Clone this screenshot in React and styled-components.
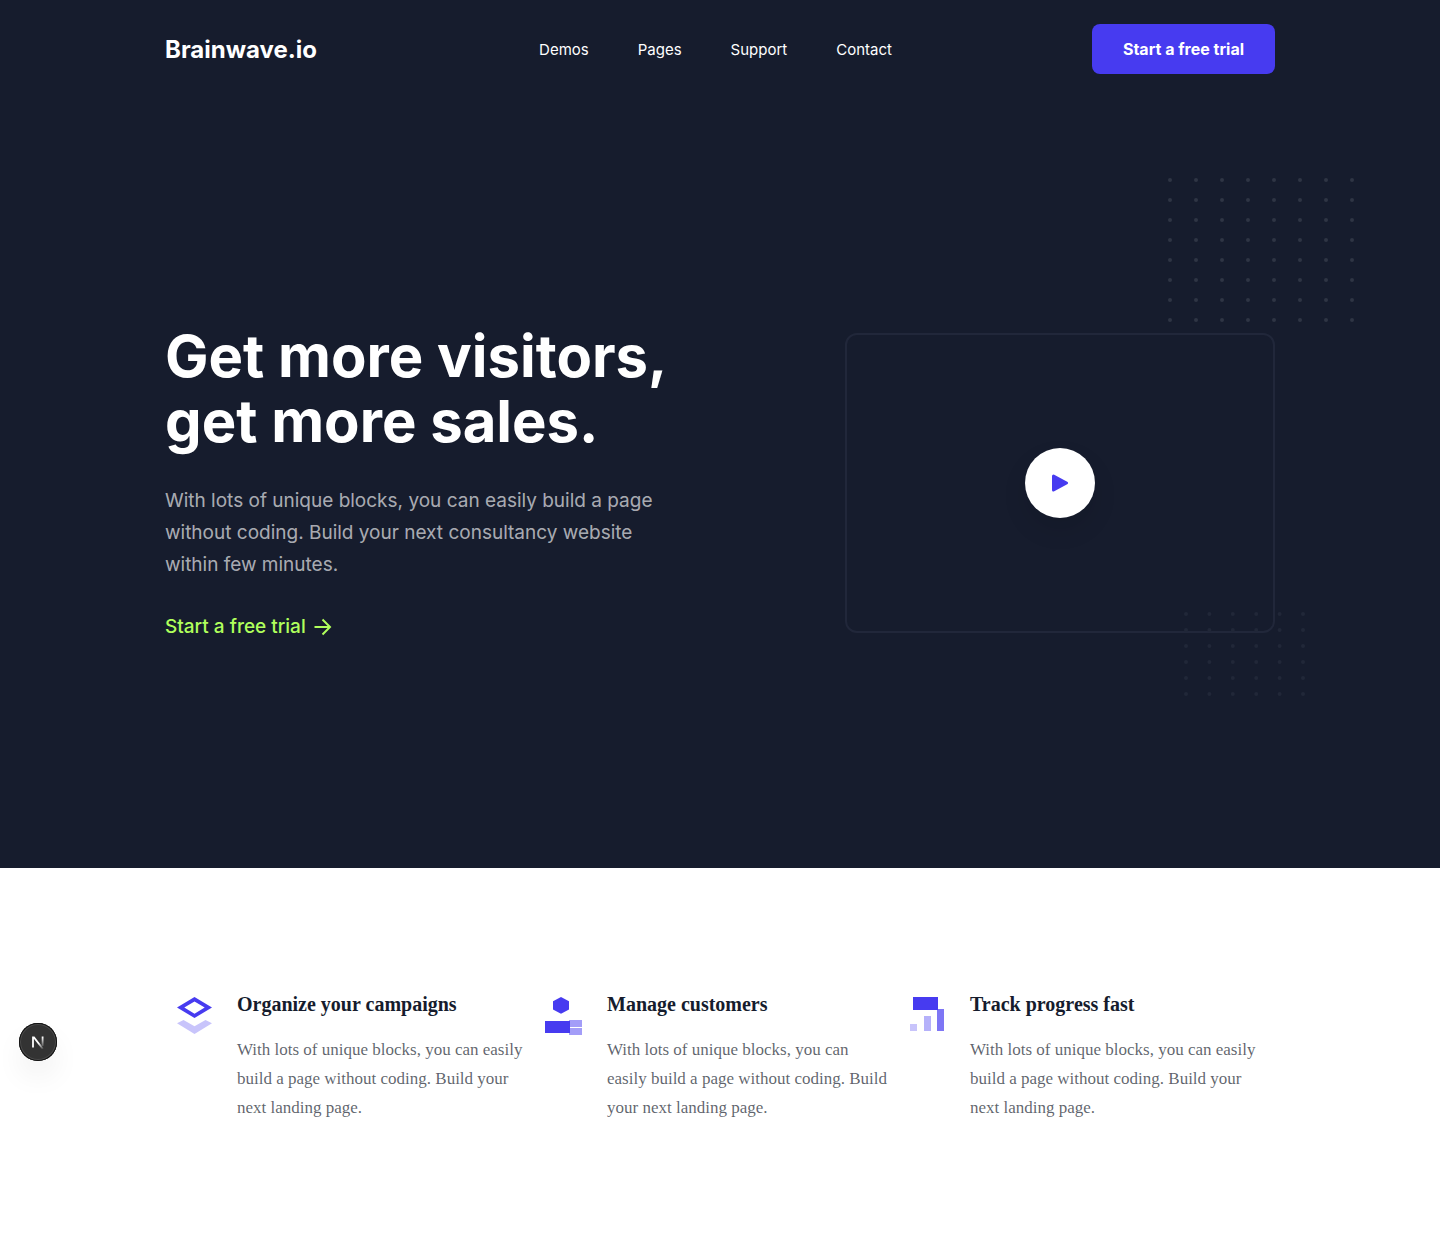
import React from "react";
import styled, { createGlobalStyle } from "styled-components";

const GlobalStyle = createGlobalStyle`
  *, *::before, *::after { box-sizing: border-box; }
  body { margin: 0; background: #ffffff; font-family: Inter, sans-serif; }
  h1, h2, p { margin: 0; }
  a { color: inherit; text-decoration: none; }
  button { border: 0; font-family: inherit; cursor: pointer; }
`;

const Container = styled.div`
  width: 100%;
  max-width: 1142px;
  margin: 0 auto;
  padding: 0 16px;
`;

const Dark = styled.div`
  background: #161c2d;
  color: #ffffff;
  overflow: hidden;
`;

const HeaderRow = styled(Container)`
  display: flex;
  align-items: center;
  justify-content: space-between;
  padding-top: 24px;
  padding-bottom: 24px;
`;

const Brand = styled.a`
  padding-top: 2px;
  font-size: 24px;
  font-weight: 700;
  line-height: 32px;
`;

const Nav = styled.nav`
  display: flex;
  gap: 49px;
  margin-left: 22px;
  padding-top: 2px;
`;

const NavLink = styled.a`
  font-size: 15px;
  line-height: 24px;
`;

const TrialButton = styled.button`
  min-width: 183px;
  height: 50px;
  padding: 0 24px;
  border-radius: 8px;
  background: #473bf0;
  color: #ffffff;
  font-size: 16px;
  font-weight: 700;
`;

const Hero = styled(Container)`
  display: flex;
  align-items: center;
  justify-content: space-between;
  gap: 32px;
  min-height: 770px;
`;

const HeroCopy = styled.div`
  flex: 0 1 540px;
`;

const Headline = styled.h1`
  font-size: 58px;
  font-weight: 700;
  line-height: 65px;
`;

const Lead = styled.p`
  max-width: 490px;
  margin-top: 31px;
  font-size: 19px;
  line-height: 32px;
  color: rgba(255, 255, 255, 0.65);
`;

const TextLink = styled.a`
  display: inline-flex;
  align-items: center;
  gap: 8px;
  margin-top: 30px;
  color: #b0ff5c;
  font-size: 19px;
  font-weight: 500;
  line-height: 32px;
`;

const VideoCard = styled.div`
  position: relative;
  display: flex;
  align-items: center;
  justify-content: center;
  flex: 0 1 430px;
  height: 300px;
  border: 2px solid #21273a;
  border-radius: 12px;
`;

const DotGrid = styled.svg`
  position: absolute;
  top: ${(p) => p.$top}px;
  right: ${(p) => p.$right}px;
  fill: ${(p) => p.$color};
  pointer-events: none;
`;

const PlayButton = styled.button`
  display: flex;
  align-items: center;
  justify-content: center;
  width: 70px;
  height: 70px;
  padding: 0;
  border-radius: 50%;
  background: #ffffff;
  box-shadow: 0 12px 24px rgba(0, 0, 0, 0.1);
`;

const Features = styled(Container)`
  display: grid;
  grid-template-columns: 368fr 365fr 377fr;
  padding-top: 120px;
  padding-bottom: 120px;
`;

const Feature = styled.article`
  display: flex;
  align-items: flex-start;
  gap: 25px;
  padding: 0 8px 0 12px;

  svg { flex: none; margin-top: 9px; }
`;

const FeatureTitle = styled.h2`
  font-family: "Liberation Serif", serif;
  font-size: 20px;
  font-weight: 700;
  line-height: 32px;
  color: #161c2d;
`;

const FeatureText = styled.p`
  margin-top: 15px;
  font-family: "Liberation Serif", serif;
  font-size: 17px;
  line-height: 29px;
  color: rgba(22, 28, 45, 0.7);
`;

const DevBadge = styled.button`
  position: fixed;
  left: 19px;
  bottom: 182px;
  display: flex;
  align-items: center;
  justify-content: center;
  width: 38px;
  height: 38px;
  padding: 0;
  border-radius: 50%;
  background: #333333;
  box-shadow: inset 0 0 0 1px #111111, inset 0 0 0 2px #4a4a4a,
    0 16px 32px -8px rgba(0, 0, 0, 0.16);
`;

function Dots({ cols, rows, dx, dy, ...place }) {
  const width = Math.ceil((cols - 1) * dx + 4);
  const height = (rows - 1) * dy + 4;
  const dots = [];
  for (let r = 0; r < rows; r++) {
    for (let c = 0; c < cols; c++) {
      dots.push(<circle key={`${r}-${c}`} cx={2 + c * dx} cy={2 + r * dy} r="2" />);
    }
  }
  return (
    <DotGrid width={width} height={height} aria-hidden="true" {...place}>
      {dots}
    </DotGrid>
  );
}

const LayersIcon = () => (
  <svg width="35" height="38" viewBox="0 0 35 38" aria-hidden="true">
    <path
      fill="#473bf0"
      fillRule="evenodd"
      d="M17.5 0 35 10.5 17.5 21 0 10.5ZM17.5 4.4 7.3 10.5 17.5 16.8 27.7 10.5Z"
    />
    <path fill="#c8c4fb" d="M0 26.3 6.5 23 17.5 29.2 28.5 23 35 26.3 17.5 37Z" />
  </svg>
);

const CustomersIcon = () => (
  <svg width="37" height="38" viewBox="0 0 37 38" aria-hidden="true">
    <path fill="#473bf0" d="M16 0 24 4.2V12.6L16 16.8 8 12.6V4.2Z" />
    <path fill="#a39df8" d="M24 23H37V30H24ZM24 31H37V38H24Z" />
    <path fill="#473bf0" d="M0 24H25V36H0Z" />
  </svg>
);

const ProgressIcon = () => (
  <svg width="35" height="38" viewBox="0 0 35 38" aria-hidden="true">
    <path fill="#7e76f5" d="M27 12H34V34H27Z" />
    <path fill="#473bf0" d="M3 0H28V13H3Z" />
    <path fill="#b5b1fa" d="M14 19H21V34H14Z" />
    <path fill="#c8c4fb" d="M0 27H7V34H0Z" />
  </svg>
);

const features = [
  { title: "Organize your campaigns", Icon: LayersIcon },
  { title: "Manage customers", Icon: CustomersIcon },
  { title: "Track progress fast", Icon: ProgressIcon },
];

export default function App() {
  return (
    <>
      <GlobalStyle />
      <Dark>
        <header>
          <HeaderRow>
            <Brand href="#home">Brainwave.io</Brand>
            <Nav aria-label="Main">
              {["Demos", "Pages", "Support", "Contact"].map((item) => (
                <NavLink key={item} href={`#${item.toLowerCase()}`}>
                  {item}
                </NavLink>
              ))}
            </Nav>
            <TrialButton type="button">Start a free trial</TrialButton>
          </HeaderRow>
        </header>
        <Hero as="section">
          <HeroCopy>
            <Headline>
              Get more visitors,
              <br />
              get more sales.
            </Headline>
            <Lead>
              With lots of unique blocks, you can easily build a page without
              coding. Build your next consultancy website within few minutes.
            </Lead>
            <TextLink href="#trial">
              Start a free trial
              <svg width="18" height="18" viewBox="0 0 18 18" fill="none" stroke="currentColor" strokeWidth="2" aria-hidden="true">
                <path d="M0.5 9H16M8.5 1.5 16 9 8.5 16.5" />
              </svg>
            </TextLink>
          </HeroCopy>
          <VideoCard>
            <Dots cols={8} rows={8} dx={26} dy={20} $top={-157} $right={-81} $color="#2f3544" />
            <Dots cols={6} rows={6} dx={23.4} dy={16} $top={277} $right={-32} $color="#212738" />
            <PlayButton type="button" aria-label="Play video">
              <svg width="18" height="18" viewBox="0 0 18 18" aria-hidden="true">
                <path d="M2.5 2 15.5 9 2.5 16Z" fill="#473bf0" stroke="#473bf0" strokeWidth="3" strokeLinejoin="round" />
              </svg>
            </PlayButton>
          </VideoCard>
        </Hero>
      </Dark>
      <Features as="section">
        {features.map(({ title, Icon }) => (
          <Feature key={title}>
            <Icon />
            <div>
              <FeatureTitle>{title}</FeatureTitle>
              <FeatureText>
                With lots of unique blocks, you can easily build a page without
                coding. Build your next landing page.
              </FeatureText>
            </div>
          </Feature>
        ))}
      </Features>
      <DevBadge type="button" aria-label="Open developer tools">
        <svg width="14" height="14" viewBox="0 0 14 14" fill="none" strokeWidth="1.8" aria-hidden="true">
          <defs>
            <linearGradient id="diag" x1="8" y1="8" x2="13" y2="14" gradientUnits="userSpaceOnUse">
              <stop offset="0" stopColor="#fff" />
              <stop offset="1" stopColor="#fff" stopOpacity="0" />
            </linearGradient>
            <linearGradient id="stem" x1="0" y1="2" x2="0" y2="13" gradientUnits="userSpaceOnUse">
              <stop offset="0" stopColor="#fff" />
              <stop offset="1" stopColor="#fff" stopOpacity="0" />
            </linearGradient>
          </defs>
          <path d="M2 12.5V2.5H3L12 14" stroke="url(#diag)" />
          <path d="M11.6 1.5V11" stroke="url(#stem)" />
        </svg>
      </DevBadge>
    </>
  );
}
